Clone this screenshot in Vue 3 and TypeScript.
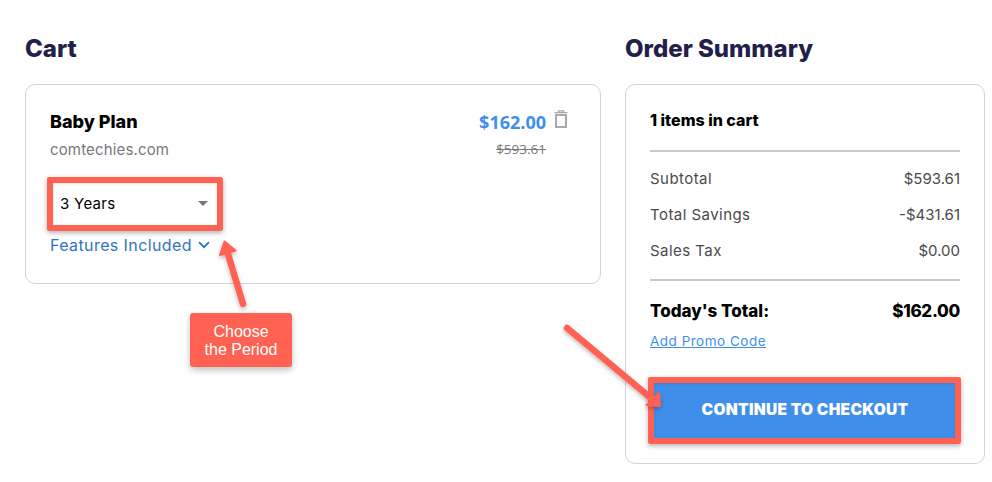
<script setup lang="ts">
const rows = [
  { label: 'Subtotal', value: '$593.61' },
  { label: 'Total Savings', value: '-$431.61' },
  { label: 'Sales Tax', value: '$0.00' },
]
</script>

<template>
  <div class="page">
    <section class="cart">
      <h2>Cart</h2>
      <div class="card cart-card">
        <div class="item-top">
          <div>
            <div class="plan">Baby Plan</div>
            <div class="domain">comtechies.com</div>
          </div>
          <div class="prices">
            <div class="price-line">
              <span class="price">$162.00</span>
              <svg class="trash" width="14" height="18" viewBox="0 0 14 18">
                <path d="M0.5 2.6H13.5M4.5 2.2V0.9H9.5V2.2" fill="none" stroke="#a9a9ab" stroke-width="1.4" />
                <path d="M2 5H12V17H2Z" fill="none" stroke="#a9a9ab" stroke-width="2" />
              </svg>
            </div>
            <div class="old">$593.61</div>
          </div>
        </div>
        <div class="select">
          <span>3 Years</span>
          <i class="caret"></i>
        </div>
        <div class="features">
          Features Included
          <svg width="12" height="8" viewBox="0 0 12 8"><path d="M1 1.2L6 6.2L11 1.2" fill="none" stroke="#2f74c4" stroke-width="1.8" /></svg>
        </div>
      </div>
    </section>

    <section class="summary">
      <h2>Order Summary</h2>
      <div class="card summary-card">
        <div class="count">1 items in cart</div>
        <div class="rows">
          <div v-for="r in rows" :key="r.label" class="row">
            <span class="label">{{ r.label }}</span><span>{{ r.value }}</span>
          </div>
        </div>
        <div class="total"><span>Today's Total:</span><span class="total-value">$162.00</span></div>
        <a class="promo">Add Promo Code</a>
        <button class="checkout">CONTINUE TO CHECKOUT</button>
      </div>
    </section>

    <div class="mark-select"></div>
    <div class="mark-button"></div>
    <div class="callout">Choose<br />the Period</div>
    <svg class="arrows" width="992" height="482" viewBox="0 0 992 482">
      <defs>
        <filter id="sh" x="-30%" y="-30%" width="160%" height="160%">
          <feDropShadow dx="0" dy="2" stdDeviation="2" flood-color="#000" flood-opacity="0.28" />
        </filter>
      </defs>
      <g filter="url(#sh)" fill="#ff6252" stroke="#ff6252" stroke-linejoin="round" stroke-linecap="round">
        <path d="M243 304L228 254" stroke-width="6.5" fill="none" />
        <path d="M224.5 241.5L235.5 250.5L220 255Z" stroke-width="2" />
        <path d="M567 328L652 399" stroke-width="6.5" fill="none" />
        <path d="M660 406L646.5 405L659 393Z" stroke-width="2" />
      </g>
    </svg>
  </div>
</template>

<style scoped>
.page {
  position: relative;
  width: 992px;
  height: 482px;
  overflow: hidden;
  display: flex;
  gap: 24px;
  padding: 0 7px 0 25px;
  box-sizing: border-box;
  background: #fff;
  font-family: Inter, "Liberation Sans", sans-serif;
}
h2 {
  margin: 0;
  height: 84px;
  box-sizing: border-box;
  padding-top: 34px;
  font-size: 24px;
  line-height: 30px;
  font-weight: 800;
  color: #22204a;
}
.cart { width: 576px; }
.summary { width: 360px; }
.card {
  box-sizing: border-box;
  border: 1px solid #cfd3e0;
  border-radius: 10px;
}
.cart-card {
  height: 200px;
  padding: 24px 24px 0;
}
.item-top {
  display: flex;
  justify-content: space-between;
}
.plan {
  font-size: 18px;
  line-height: 26px;
  font-weight: 800;
  color: #000;
}
.domain {
  margin-top: 5px;
  font-size: 15px;
  line-height: 20px;
  letter-spacing: 0.15px;
  color: #77787b;
}
.prices {
  display: flex;
  flex-direction: column;
  align-items: flex-end;
  padding-right: 8px;
}
.price-line {
  display: flex;
  align-items: flex-start;
  gap: 8px;
}
.price {
  font-family: "Open Sans", sans-serif;
  font-size: 18px;
  line-height: 26px;
  font-weight: 700;
  color: #3f8fea;
}
.trash { margin-top: 1px; }
.old {
  margin-top: 5px;
  margin-right: 22px;
  font-family: "Open Sans", sans-serif;
  font-size: 13.5px;
  line-height: 18px;
  color: #77787b;
  text-decoration: line-through;
}
.select {
  margin-top: 24px;
  margin-left: -2px;
  width: 163px;
  height: 38px;
  padding: 0 3px 0 12px;
  box-sizing: border-box;
  display: flex;
  align-items: center;
  justify-content: space-between;
  font-size: 15px;
  letter-spacing: 0.3px;
  color: #000;
}
.caret {
  width: 0;
  height: 0;
  border-left: 5px solid transparent;
  border-right: 5px solid transparent;
  border-top: 5px solid #77787b;
}
.features {
  margin-top: 13px;
  display: flex;
  align-items: center;
  gap: 6px;
  font-size: 16px;
  line-height: 20px;
  letter-spacing: 0.4px;
  color: #2f74c4;
}
.summary-card {
  height: 380px;
  padding: 24px 24px 0;
}
.count {
  height: 41px;
  font-size: 16px;
  line-height: 22px;
  font-weight: 800;
  color: #000;
  border-bottom: 2px solid #c9c9cb;
}
.rows {
  padding: 8px 0 11px;
  border-bottom: 2px solid #c9c9cb;
}
.row {
  display: flex;
  justify-content: space-between;
  height: 36px;
  align-items: center;
  font-size: 15px;
  color: #4a4a4c;
}
.label {
  letter-spacing: 0.45px;
}
.total {
  display: flex;
  justify-content: space-between;
  margin-top: 17px;
  font-size: 17px;
  line-height: 26px;
  font-weight: 800;
  color: #000;
}
.total-value {
  letter-spacing: -0.3px;
}
.promo {
  display: block;
  width: fit-content;
  margin-top: 7px;
  font-size: 13.5px;
  line-height: 20px;
  letter-spacing: 0.5px;
  color: #3f8fea;
  text-decoration: underline;
}
.checkout {
  display: block;
  width: 100%;
  height: 60px;
  margin-top: 27px;
  padding: 2px 0 0;
  border: 0;
  background: #3f8fea;
  color: #fff;
  font-family: inherit;
  font-size: 15.5px;
  font-weight: 900;
  letter-spacing: 0.3px;
}
.mark-select,
.mark-button {
  position: absolute;
  box-sizing: border-box;
  border: 6px solid #ff6252;
  border-radius: 2px;
  box-shadow: 0 2px 5px rgba(0, 0, 0, 0.3), inset 0 1px 3px rgba(0, 0, 0, 0.12);
}
.mark-select {
  left: 47px;
  top: 177px;
  width: 176px;
  height: 54px;
}
.mark-button {
  left: 648px;
  top: 377px;
  width: 313px;
  height: 67px;
}
.callout {
  position: absolute;
  left: 190px;
  top: 313px;
  width: 102px;
  height: 54px;
  box-sizing: border-box;
  padding-top: 10px;
  background: #ff6252;
  border-radius: 3px;
  box-shadow: 0 3px 6px rgba(0, 0, 0, 0.25);
  color: #fff;
  font-family: "Liberation Sans", Arial, sans-serif;
  font-size: 16px;
  line-height: 18px;
  text-align: center;
}
.arrows {
  position: absolute;
  left: 0;
  top: 0;
  pointer-events: none;
}
</style>
